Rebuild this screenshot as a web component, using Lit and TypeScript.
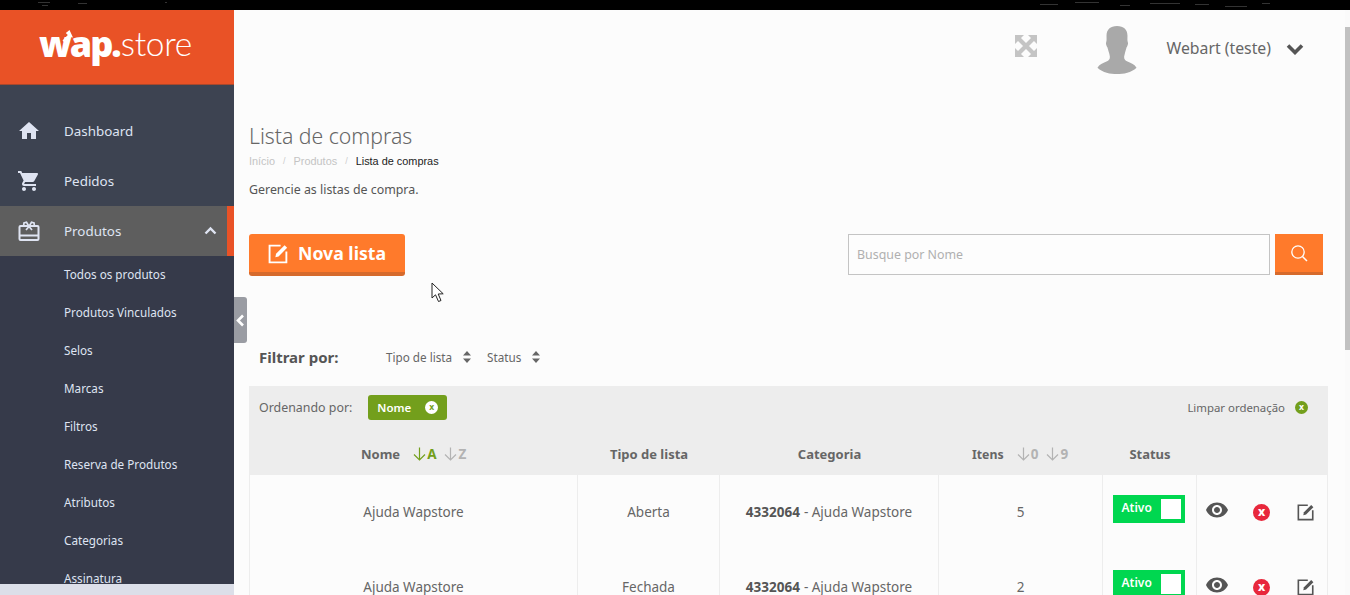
import { LitElement, html, css, svg } from "lit";
import { customElement } from "lit/decorators.js";

const sub = ["Todos os produtos","Produtos Vinculados","Selos","Marcas","Filtros","Reserva de Produtos","Atributos","Categorias","Assinatura"];
const rows = [
  { tipo: "Aberta", itens: "5" },
  { tipo: "Fechada", itens: "2" },
];
const homeP = "M10 20v-6h4v6h5v-8h3L12 3 2 12h3v8z";
const cartP = "M7 18c-1.1 0-1.99.9-1.99 2S5.9 22 7 22s2-.9 2-2-.9-2-2-2zM1 2v2h2l3.6 7.59-1.35 2.45c-.16.28-.25.61-.25.96 0 1.1.9 2 2 2h12v-2H7.42c-.14 0-.25-.11-.25-.25l.03-.12.9-1.63h7.45c.75 0 1.41-.41 1.75-1.03l3.58-6.49c.08-.14.12-.31.12-.48 0-.55-.45-1-1-1H5.21l-.94-2H1zm16 16c-1.1 0-1.99.9-1.99 2s.89 2 1.99 2 2-.9 2-2-.9-2-2-2z";
const eyeP = "M12 4.5C7 4.5 2.73 7.61 1 12c1.73 4.39 6 7.5 11 7.5s9.27-3.11 11-7.5c-1.73-4.39-6-7.5-11-7.5zM12 17c-2.76 0-5-2.24-5-5s2.24-5 5-5 5 2.24 5 5-2.24 5-5 5zm0-8c-1.66 0-3 1.34-3 3s1.34 3 3 3 3-1.34 3-3-1.34-3-3-3z";

const editIcon = (size: number, color: string) => html`<svg width=${size} height=${size} viewBox="0 0 20 20" fill="none">
  <path d="M12 2.5H1.500V18.500H17.500V8" stroke=${color} stroke-width="1.800"/>
  <path d="M7 13.500l.7-3.200L15.800 2.200l2.400 2.400-8.100 8.200z" fill=${color}/>
</svg>`;

const updown = html`<svg class="updown" width="10" height="14" viewBox="0 0 10 14"><path d="M5 1l4 4.500H1zM5 13L1 8.500h8z" fill="#666"/></svg>`;

const sortIco = (letter: string, on: boolean) => html`<span class="sort ${on ? "on" : ""}"><svg width="13" height="14" viewBox="0 0 13 14" fill="none"><path d="M6.500 0.500V13M1 7.500l5.500 5.500 5.500-5.500" stroke="currentColor" stroke-width="1.200"/></svg>${letter}</span>`;

const dots = [[38,2,12],[42,5,6],[78,3,9],[165,2,2],[1040,4,18],[1075,2,24],[1120,5,10],[1150,3,30],[1195,4,14],[1225,6,22],[1262,3,8]];

@customElement("app-root")
export class AppRoot extends LitElement {
  static styles = css`
    :host { display: block; width: 1350px; height: 595px; overflow: hidden; position: relative; font-family: "Noto Sans", sans-serif; color: #555; background: #fcfcfc; }
    * { box-sizing: border-box; }
    .noise { height: 10px; background: #000; display: block; width: 100%; }
    .layout { display: flex; height: 585px; }
    .side { width: 234px; flex: none; display: flex; flex-direction: column; background: #dcdfe9; }
    .logo { height: 75px; background: #e95226; border-bottom: 1px solid #a8482c; display: flex; align-items: center; justify-content: flex-start; color: #fff; padding: 0 0 6px 39px; }
    .logo .mark { position: relative; font-family: "Open Sans", sans-serif; font-weight: 800; font-size: 36px; letter-spacing: -2px; line-height: 1; }
    .logo .mark svg { position: absolute; left: 21px; top: 4px; }
    .logo .rest { font-family: "Lato", sans-serif; font-weight: 300; font-size: 33.500px; line-height: 1; letter-spacing: -.3px; margin-left: 1px; }
    .navtop { background: #3d4351; padding-top: 21px; flex: none; }
    .item { height: 50px; display: flex; align-items: center; color: #dfe4f2; font-size: 13.400px; position: relative; padding-bottom: 1px; }
    .item .ic { width: 64px; flex: none; padding-left: 17px; display: flex; }
    .item.active { background: #5e5e5e; border-right: 7px solid #e95226; }
    .item .chev { position: absolute; right: 10px; top: 20px; }
    .subs { background: #363a4a; height: 328px; overflow: hidden; flex: none; }
    .subitem { height: 38px; display: flex; align-items: center; padding: 0 0 2px 64px; font-size: 11.700px; color: #dfe4f2; }
    .main { flex: 1; min-width: 0; position: relative; padding: 0 17px 0 15px; overflow: hidden; }
    .scroll { width: 5px; flex: none; background: #fafafa; padding-top: 17px; }
    .scroll i { display: block; height: 323px; background: #c1c1c1; }
    .top { height: 75px; display: flex; align-items: center; justify-content: flex-end; padding-right: 13px; }
    .expand { margin-right: 60px; display: flex; margin-top: -3px; }
    .avatar { margin-right: 30px; display: flex; margin-top: 5px; }
    .user { font-size: 15.800px; color: #666; margin-right: 15px; margin-top: 0; }
    .userchev { margin-top: 3px; display: flex; width: 29px; }
    h1 { margin: 37px 0 0; font-weight: 300; font-size: 21.200px; line-height: 28px; color: #666; }
    .crumb { font-family: "Liberation Sans", sans-serif; font-size: 10.900px; line-height: 14px; margin-top: 4px; color: #c4c4c4; display: flex; gap: 8px; }
    .crumb b { font-weight: 400; color: #222; }
    .crumb span.sep { font-size: 9px; color: #ccc; }
    .desc { font-size: 12.400px; line-height: 18px; margin: 13px 0 0; color: #555; }
    .actions { display: flex; align-items: flex-start; justify-content: space-between; margin-top: 35px; height: 42px; padding-right: 5px; }
    .nova { width: 156px; height: 42px; background: #ff7a2b; border: 0; border-bottom: 4px solid #d66a2c; border-radius: 3px; color: #fff; font: 700 17.700px "Noto Sans", sans-serif; display: flex; align-items: center; gap: 9px; padding: 0 0 0 19px; }
    .search { display: flex; gap: 5px; }
    .search .inp { width: 422px; height: 41px; border: 1px solid #c4c4c4; background: #fdfdfd; color: #b0b0b0; font-size: 12.400px; display: flex; align-items: center; padding-left: 8px; }
    .search .btn { width: 48px; height: 41px; background: #ff7a2b; border-bottom: 3px solid #d66a2c; display: flex; align-items: center; justify-content: center; }
    .filters { display: flex; align-items: center; margin-top: 61px; height: 40px; padding-left: 10px; font-size: 11.700px; color: #666; }
    .filters strong { font-size: 15px; font-weight: 700; color: #555; width: 127px; }
    .filters .f { display: flex; align-items: center; gap: 10px; margin-right: 15px; }
    .grid { margin-top: 9px; width: 1079px; }
    .orderbar { height: 43px; background: #ededed; display: flex; align-items: center; justify-content: space-between; padding: 0 20px 0 10px; font-size: 12.400px; color: #666; }
    .orderbar .l { display: flex; align-items: center; gap: 16px; }
    .chip { width: 79px; height: 25px; background: #739f1c; border-radius: 3px; color: #fff; font-size: 11.500px; font-weight: 600; display: flex; align-items: center; justify-content: space-between; padding: 0 9px; }
    .x { width: 13px; height: 13px; border-radius: 50%; background: #fff; color: #739f1c; font-size: 8.500px; font-weight: 700; display: inline-flex; align-items: center; justify-content: center; line-height: 1; }
    .x.g { background: #739f1c; color: #fff; margin-left: 10px; }
    .orderbar .r { display: flex; align-items: center; font-size: 11.400px; }
    .row { display: grid; grid-template-columns: 328px 142px 219px 164px 94px 132px; }
    .row.head { height: 46px; background: #ededed; font-size: 13px; font-weight: 700; color: #666; }
    .row.head > div { display: flex; align-items: center; justify-content: center; padding: 3px 0 0 2px; }
    .row.head .nome { justify-content: flex-start; padding-left: 112px; }
    .row.head .itens { justify-content: flex-start; padding-left: 34px; }
    .row.head .itens b { font-weight: 700; font-size: 12.300px; padding-top: 1px; }
    .sort { display: inline-flex; align-items: center; gap: 1px; color: #b3b3b3; font-size: 13.500px; margin-left: 8px; }
    .sort.on { color: #739f1c; margin-left: 13px; }
    .itens .sort:first-of-type { margin-left: 13px; }
    .row.data { height: 75px; font-size: 13.500px; color: #666; border-right: 1px solid #ededed; border-left: 1px solid #ededed; }
    .row.data > div { display: flex; align-items: center; justify-content: center; border-right: 1px solid #ededed; padding-bottom: 1px; }
    .row.data > div:last-child { border-right: 0; }
    .row.data b { font-weight: 700; margin-right: 4px; color: #555; }
    .toggle { width: 72px; height: 28px; background: #00d750; display: flex; align-items: center; justify-content: space-between; padding: 0 4px 2px 9px; color: #fff; font-size: 12px; font-weight: 600; margin: -7px 2px 0 0; }
    .toggle i { width: 20px; height: 20px; background: #fff; display: block; margin-top: 2px; }
    .acts { justify-content: flex-start !important; padding-left: 8px; }
    .acts svg { display: block; }
    .acts .eye { margin-top: -5px; }
    .del { width: 17px; height: 17px; border-radius: 50%; background: #e8283c; color: #fff; font-size: 12px; font-weight: 800; display: flex; align-items: center; justify-content: center; line-height: 1; margin: 1px 27px 0 24px; padding-bottom: 2px; }
    .collapse { position: absolute; left: 0; top: 287px; width: 13px; height: 46px; background: #9a9ca3; border-radius: 0 3px 3px 0; display: flex; align-items: center; justify-content: center; }
    .cursor { position: absolute; left: 197px; top: 272px; }
  `;

  render() {
    return html`
      <svg class="noise" width="1350" height="10" viewBox="0 0 1350 10">${dots.map(d => svg`<rect x=${d[0]} y=${d[1]} width=${d[2]} height="1" fill="#333"/>`)}</svg>
      <div class="layout">
        <aside class="side">
          <div class="logo">
            <span class="mark">wap.<svg width="14" height="14" viewBox="0 0 14 14"><path d="M9.500 0l3.500 7.500-2.800-.6L5 13 2.500 10.500 7.800 5 5.800 3z" fill="#fff"/></svg></span><span class="rest">store</span>
          </div>
          <nav class="navtop">
            <div class="item"><span class="ic"><svg width="24" height="24" viewBox="0 0 24 24"><path d=${homeP} fill="#dfe4f2"/></svg></span>Dashboard</div>
            <div class="item"><span class="ic"><svg width="24" height="24" viewBox="0 0 24 24"><path d=${cartP} fill="#dfe4f2"/></svg></span>Pedidos</div>
            <div class="item active"><span class="ic"><svg width="24" height="24" viewBox="0 0 24 24" fill="none"><rect x="2.500" y="7" width="19" height="14" rx="1" stroke="#dfe4f2" stroke-width="2"/><path d="M2 15.500h20v2H2z" fill="#dfe4f2"/><path d="M12 7.500L9.500 3.200 7 4l-.5 3.500M12 7.500l2.500-4.300L17 4l.5 3.500M12 7.500l-3 3.500M12 7.500l3 3.500" stroke="#dfe4f2" stroke-width="1.700"/></svg></span>Produtos
              <svg class="chev" width="13" height="9" viewBox="0 0 13 9"><path d="M1.500 7.500l5-5 5 5" stroke="#dfe4f2" stroke-width="2.400" fill="none"/></svg></div>
          </nav>
          <div class="subs">${sub.map(s => html`<div class="subitem">${s}</div>`)}</div>
        </aside>
        <main class="main">
          <div class="top">
            <span class="expand"><svg width="22" height="22" viewBox="0 0 22 22"><path d="M0 0h9L0 9zM22 0v9L13 0zM0 22v-9l9 9zM22 22h-9l9-9z" fill="#c4c4c4"/><path d="M3 3l16 16M19 3L3 19" stroke="#c4c4c4" stroke-width="4.200"/></svg></span>
            <span class="avatar"><svg width="40" height="49" viewBox="0 0 42 50" preserveAspectRatio="none"><path d="M21 0c7 0 11 3.500 11 10 0 3-.3 5 .4 6.500.6 1.200-.3 4-1.400 5.500-.8 3-2 6-2.500 9-.3 2.500 1 4 3.500 5.200 4 1.800 7.500 3 9.500 6.300C36 47.500 28 49 21 49S6 47.500.5 42.500c2-3.300 5.500-4.500 9.500-6.300 2.500-1.200 3.800-2.700 3.500-5.200-.5-3-1.700-6-2.500-9-1.100-1.500-2-4.300-1.400-5.500.7-1.500.4-3.500.4-6.500C10 3.500 14 0 21 0z" fill="#a9a9a9"/></svg></span>
            <span class="user">Webart (teste)</span>
            <span class="userchev"><svg width="18" height="12" viewBox="0 0 18 12"><path d="M2 2.500l7 7 7-7" stroke="#555" stroke-width="3.600" fill="none"/></svg></span>
          </div>
          <h1>Lista de compras</h1>
          <div class="crumb"><span>Início</span><span class="sep">/</span><span>Produtos</span><span class="sep">/</span><b>Lista de compras</b></div>
          <p class="desc">Gerencie as listas de compra.</p>
          <div class="actions">
            <button class="nova">${editIcon(21, "#fff")}Nova lista</button>
            <div class="search">
              <div class="inp">Busque por Nome</div>
              <div class="btn"><svg width="18" height="18" viewBox="0 0 18 18" fill="none"><circle cx="8" cy="8" r="6.200" stroke="#fff" stroke-width="1.300"/><path d="M12.500 12.500L17 17" stroke="#fff" stroke-width="1.500"/></svg></div>
            </div>
          </div>
          <div class="filters">
            <strong>Filtrar por:</strong>
            <span class="f">Tipo de lista ${updown}</span>
            <span class="f">Status ${updown}</span>
          </div>
          <section class="grid">
            <div class="orderbar">
              <div class="l">Ordenando por: <span class="chip">Nome <span class="x">x</span></span></div>
              <div class="r">Limpar ordenação <span class="x g">x</span></div>
            </div>
            <div class="row head">
              <div class="nome">Nome ${sortIco("A", true)}${sortIco("Z", false)}</div>
              <div>Tipo de lista</div>
              <div>Categoria</div>
              <div class="itens"><b>Itens</b>${sortIco("0", false)}${sortIco("9", false)}</div>
              <div class="status">Status</div>
              <div></div>
            </div>
            ${rows.map(r => html`<div class="row data">
              <div>Ajuda Wapstore</div>
              <div>${r.tipo}</div>
              <div><b>4332064</b> - Ajuda Wapstore</div>
              <div>${r.itens}</div>
              <div><span class="toggle">Ativo<i></i></span></div>
              <div class="acts">
                <svg class="eye" width="24" height="24" viewBox="0 0 24 24"><path d=${eyeP} fill="#555"/></svg>
                <span class="del">x</span>
                ${editIcon(18, "#555")}
              </div>
            </div>`)}
          </section>
          <div class="collapse"><svg width="9" height="13" viewBox="0 0 9 13"><path d="M7 1.500l-5 5 5 5" stroke="#fff" stroke-width="2.600" fill="none"/></svg></div>
          <svg class="cursor" width="14" height="21" viewBox="0 0 14 21"><path d="M1 1v15l3.500-3.200L7.500 19.500l2.500-1-2.800-6.500 5-.2z" fill="#fff" stroke="#222" stroke-width="1"/></svg>
        </main>
        <div class="scroll"><i></i></div>
      </div>
    `;
  }
}
